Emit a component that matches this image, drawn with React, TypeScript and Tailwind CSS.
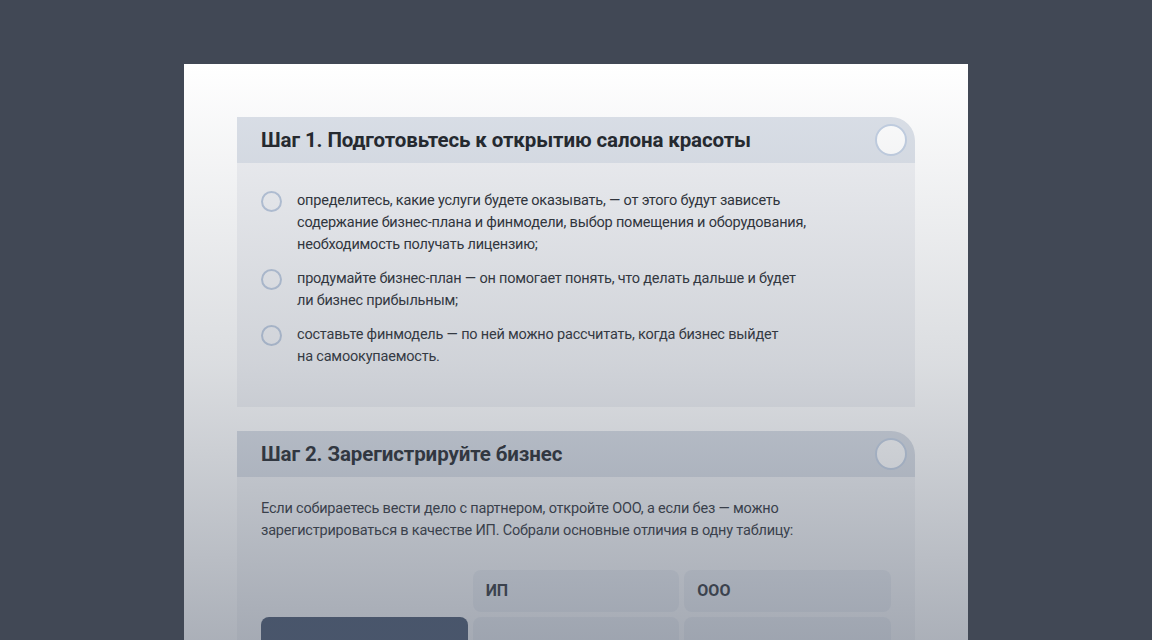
export default function App() {
  const items = [
    ['определитесь, какие услуги будете оказывать, — от этого будут зависеть', 'содержание бизнес-плана и финмодели, выбор помещения и оборудования,', 'необходимость получать лицензию;'],
    ['продумайте бизнес-план — он помогает понять, что делать дальше и будет', 'ли бизнес прибыльным;'],
    ['составьте финмодель — по ней можно рассчитать, когда бизнес выйдет', 'на самоокупаемость.'],
  ];

  return (
    <div className="h-[640px] w-[1152px] overflow-hidden bg-[#414855] pt-16" style={{ fontFamily: 'Roboto, "Noto Sans", sans-serif' }}>
      <div className="relative mx-auto h-[600px] w-[784px] overflow-hidden bg-white px-[53px] pt-[53px] text-[#2b2f36]">
        {/* Step 1 */}
        <div className="flex h-[46px] items-center justify-between rounded-tr-[24px] bg-[#dde2ea] pl-6 pr-2">
          <h2 className="text-[20.5px] font-bold tracking-[-0.1px] text-[#22262c]">Шаг 1. Подготовьтесь к открытию салона красоты</h2>
          <div className="h-8 w-8 rounded-full border-2 border-[#c3d0e3] bg-white" />
        </div>
        <div className="h-[244px] bg-[#f1f2f5] pl-6 pt-[27px]">
          {items.map((lines, i) => (
            <div key={i} className="mb-[12px] flex gap-[15px]">
              <div className="mt-[1px] h-[21px] w-[21px] shrink-0 rounded-full border-2 border-[#b7c5da]" />
              <p className="text-[14.5px] leading-[22px] tracking-[-0.2px]">
                {lines.map((l, j) => (
                  <span key={j} className="block">{l}</span>
                ))}
              </p>
            </div>
          ))}
        </div>

        {/* Step 2 */}
        <div className="mt-6 flex h-[46px] items-center justify-between rounded-tr-[24px] bg-[#d8dde5] pl-6 pr-2">
          <h2 className="text-[20.5px] font-bold tracking-[-0.1px] text-[#22262c]">Шаг 2. Зарегистрируйте бизнес</h2>
          <div className="h-8 w-8 rounded-full border-2 border-[#c3d0e3] bg-white" />
        </div>
        <div className="h-[200px] bg-[#f3f4f6] px-6 pt-[21px]">
          <p className="text-[14.5px] leading-[22px] tracking-[-0.2px]">
            Если собираетесь вести дело с партнером, откройте ООО, а если без — можно
            <br />
            зарегистрироваться в качестве ИП. Собрали основные отличия в одну таблицу:
          </p>
          <div className="mt-[28px] grid grid-cols-3 gap-[5px]">
            <div />
            <div className="flex h-[42px] items-center rounded-lg bg-[#e6e9ee] px-[13px] text-[16px] font-bold text-[#2b2f36]">ИП</div>
            <div className="flex h-[42px] items-center rounded-lg bg-[#e6e9ee] px-[13px] text-[16px] font-bold text-[#2b2f36]">ООО</div>
            <div className="h-[42px] rounded-t-lg bg-[#42516a]" />
            <div className="h-[42px] rounded-t-lg bg-[#e6e9ee]" />
            <div className="h-[42px] rounded-t-lg bg-[#e6e9ee]" />
          </div>
        </div>

        <div className="pointer-events-none absolute inset-0 bg-gradient-to-b from-transparent via-[rgba(90,100,115,0.22)] to-[rgba(80,90,108,0.5)]" />
      </div>
    </div>
  );
}
